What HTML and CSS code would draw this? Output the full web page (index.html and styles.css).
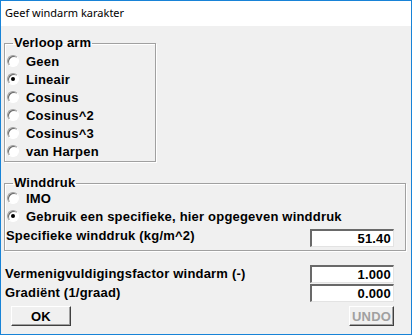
FILE: index.html
```html
<!DOCTYPE html>
<html lang="nl">
<head>
    <meta charset="UTF-8">
    <title>Geef windarm karakter</title>
    <link rel="stylesheet" href="styles.css">
</head>
<body>
    <div class="window">
        <div class="titlebar">Geef windarm karakter</div>

        <div class="content">
            <fieldset class="group group-arm">
                <legend>Verloop arm</legend>
                <div class="option"><span class="radio"></span>Geen</div>
                <div class="option"><span class="radio checked"></span>Lineair</div>
                <div class="option"><span class="radio"></span>Cosinus</div>
                <div class="option"><span class="radio"></span>Cosinus^2</div>
                <div class="option"><span class="radio"></span>Cosinus^3</div>
                <div class="option"><span class="radio"></span>van Harpen</div>
            </fieldset>

            <fieldset class="group group-druk">
                <legend>Winddruk</legend>
                <div class="option"><span class="radio"></span>IMO</div>
                <div class="option"><span class="radio checked"></span>Gebruik een specifieke, hier opgegeven winddruk</div>
                <div class="field field-druk">
                    <span class="label">Specifieke winddruk (kg/m^2)</span>
                    <div class="input">51.40</div>
                </div>
            </fieldset>

            <div class="fields">
                <div class="field">
                    <span class="label">Vermenigvuldigingsfactor windarm (-)</span>
                    <div class="input">1.000</div>
                </div>
                <div class="field">
                    <span class="label">Gradiënt (1/graad)</span>
                    <div class="input">0.000</div>
                </div>
            </div>

            <div class="buttons">
                <button class="btn btn-ok">OK</button>
                <button class="btn btn-undo" disabled>UNDO</button>
            </div>
        </div>
    </div>
</body>
</html>
```

FILE: styles.css
```css
* {
    margin: 0;
    padding: 0;
    box-sizing: border-box;
}

body {
    background: #f0f0f0;
}

.window {
    width: 412px;
    height: 335px;
    border: 1px solid #1883d7;
    background: #f0f0f0;
    display: flex;
    flex-direction: column;
    font-family: "Liberation Sans", Arial, sans-serif;
    font-size: 13px;
    letter-spacing: 0.2px;
    font-weight: bold;
    color: #000;
}

.titlebar {
    height: 25px;
    line-height: 24px;
    background: #fff;
    padding-left: 4px;
    font-family: "Noto Sans", "Open Sans", sans-serif;
    font-weight: normal;
    font-size: 11px;
    letter-spacing: 0;
}

.content {
    display: flex;
    flex-direction: column;
}

.group {
    border: 1px solid #a0a0a0;
    box-shadow: 1px 1px 0 #fff, inset 1px 1px 0 #fff;
    margin-left: 3px;
    padding: 0 0 1px 1px;
}

.group legend {
    line-height: 12px;
    padding: 0 1px;
    margin-left: 7px;
}

.group-arm {
    width: 152px;
    margin-top: 11px;
    padding-top: 3px;
}

.group-druk {
    margin-top: 15px;
    margin-right: 5px;
    padding-right: 11px;
    padding-bottom: 3px;
}

.option {
    height: 18px;
    display: flex;
    align-items: center;
}

.radio {
    width: 12px;
    height: 12px;
    margin: 0 7px 0 1px;
    border-radius: 50%;
    background: #fff;
    border: 1px solid;
    border-color: #a0a0a0 #fff #fff #a0a0a0;
    box-shadow: inset 1px 1px 0 #696969;
    display: flex;
    align-items: center;
    justify-content: center;
}

.radio.checked::after {
    content: "";
    width: 4px;
    height: 4px;
    border-radius: 50%;
    background: #000;
}

.field {
    display: flex;
    justify-content: space-between;
    align-items: center;
    height: 19px;
}

.field-druk {
    height: 22px;
    align-items: flex-end;
}

.field-druk .label {
    line-height: 22px;
}

.input {
    width: 84px;
    height: 18px;
    background: #fff;
    border-top: 2px solid #696969;
    border-left: 2px solid #696969;
    border-right: 1px solid #e3e3e3;
    border-bottom: 1px solid #e3e3e3;
    text-align: right;
    padding-right: 2px;
    line-height: 15px;
}

.fields {
    margin-top: 13px;
    padding: 0 17px 0 4px;
}

.buttons {
    display: flex;
    justify-content: space-between;
    margin-top: 4px;
    padding: 0 17px 0 10px;
}

.btn {
    height: 20px;
    font-family: "Liberation Sans", Arial, sans-serif;
    font-size: 13px;
    letter-spacing: 0.2px;
    font-weight: bold;
    background: #f0f0f0;
    border: 1px solid;
    border-color: #fff #404040 #404040 #fff;
    box-shadow: inset -1px -1px 0 #a0a0a0;
    color: #000;
}

.btn-ok {
    width: 60px;
}

.btn-undo {
    width: 45px;
    color: #a0a0a0;
}
```
